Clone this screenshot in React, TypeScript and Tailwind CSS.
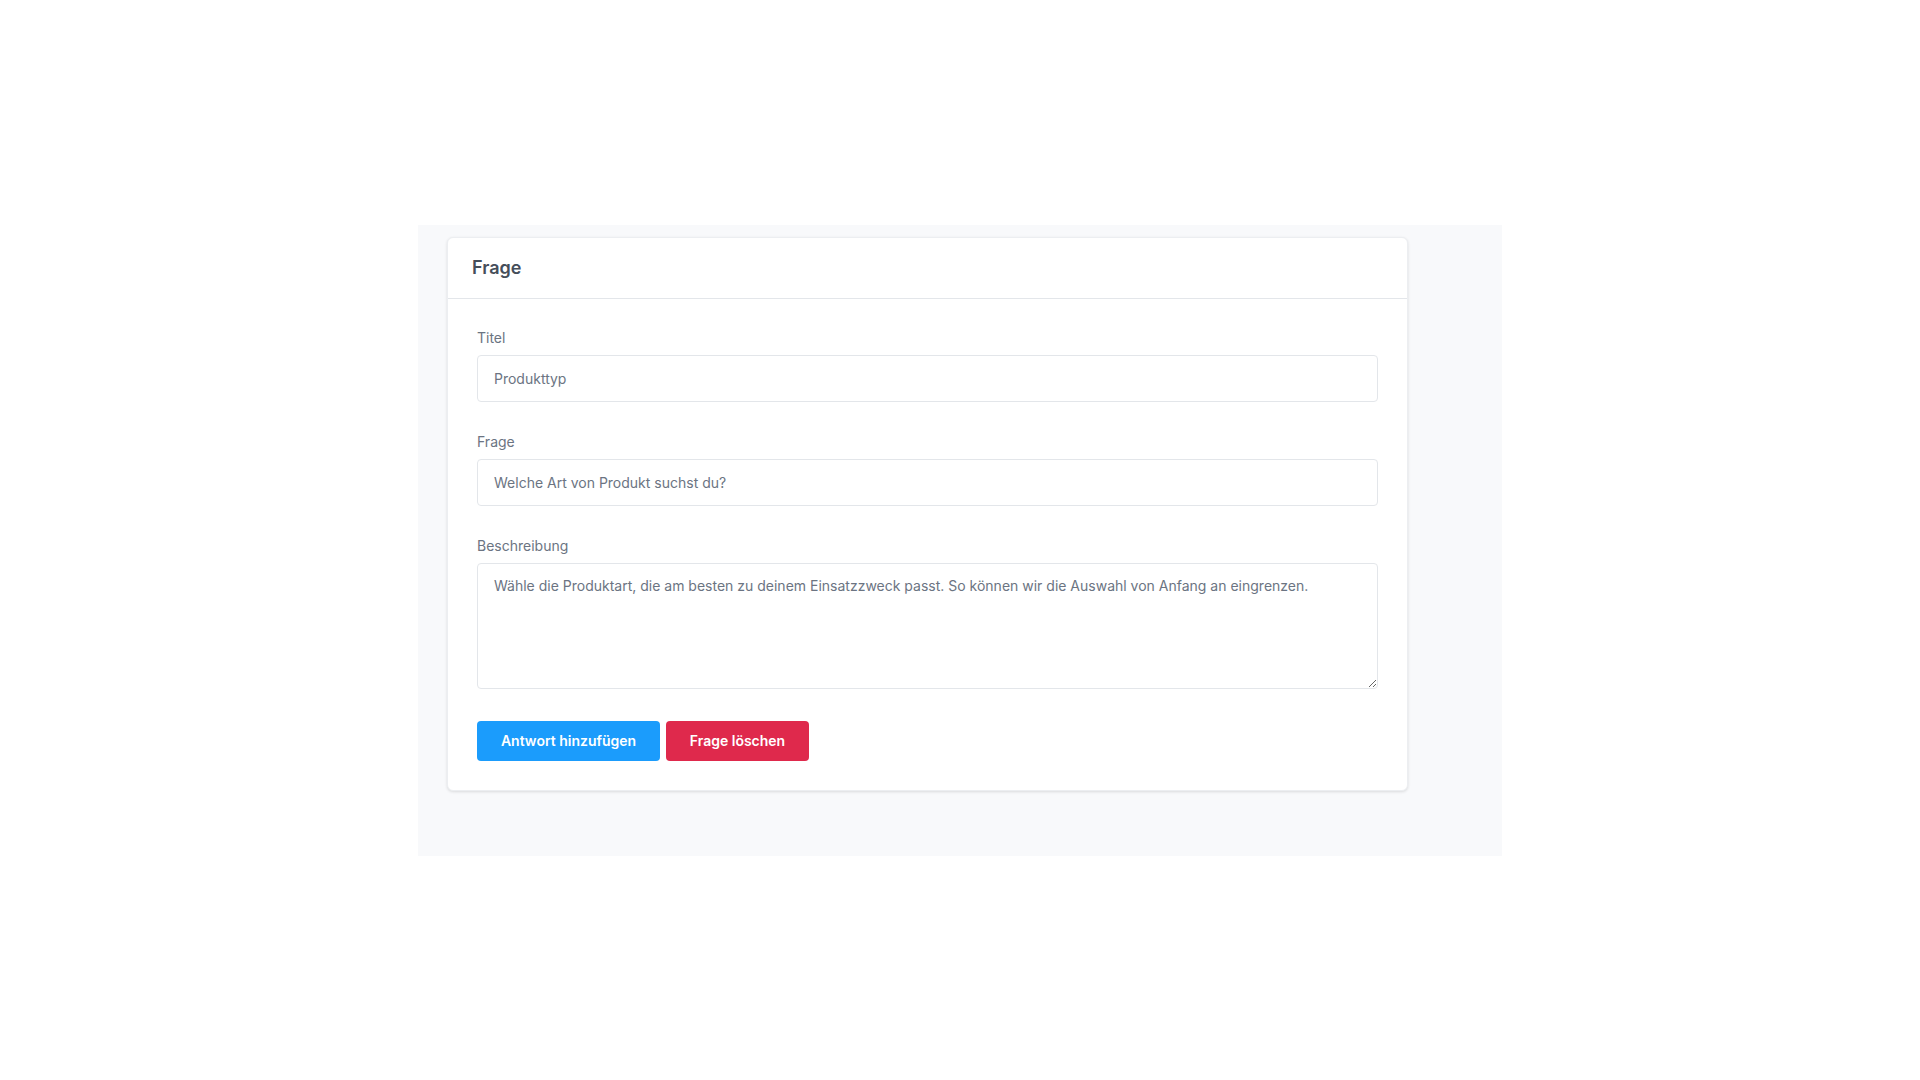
import React from "react";

const fields = [
  { label: "Titel", value: "Produkttyp" },
  { label: "Frage", value: "Welche Art von Produkt suchst du?" },
];

export default function App() {
  return (
    <div
      className="min-h-screen w-full bg-white flex items-center justify-center"
      style={{ fontFamily: "Inter, 'Noto Sans', sans-serif" }}
    >
      {/* outer panel */}
      <div className="w-[1084px] h-[631px] bg-[#f8f9fb] pt-3 pl-[29px]">
        <div className="w-[961px] bg-white rounded-md border border-[#eceef1] shadow-[0_1px_3px_rgba(0,0,0,0.12)]">
          {/* Header */}
          <div className="h-[61px] flex items-center px-6 border-b border-[#e3e6ea]">
            <h2 className="text-[18px] font-semibold text-[#454e5a]">Frage</h2>
          </div>

          {/* Body */}
          <div className="px-[29px] pt-[29px] pb-[29px]">
            {fields.map((f) => (
              <div key={f.label} className="mb-[30px]">
                <label className="block text-[14px] leading-5 text-[#6b7482] mb-[7px]">{f.label}</label>
                <input
                  type="text"
                  defaultValue={f.value}
                  className="w-full h-[47px] rounded border border-[#e3e6ea] bg-white px-4 text-[14px] text-[#6b7482] outline-none"
                />
              </div>
            ))}

            <div>
              <label className="block text-[14px] leading-5 text-[#6b7482] mb-[7px]">Beschreibung</label>
              <textarea
                defaultValue="Wähle die Produktart, die am besten zu deinem Einsatzzweck passt. So können wir die Auswahl von Anfang an eingrenzen."
                className="block w-full h-[126px] rounded border border-[#e3e6ea] bg-white px-4 pt-3 text-[14px] leading-5 text-[#6b7482] outline-none"
              />
            </div>

            <div className="flex items-center gap-[6px] mt-[32px]">
              <button className="h-10 w-[183px] rounded bg-[#1b9cfc] text-white text-[14px] font-semibold">
                Antwort hinzufügen
              </button>
              <button className="h-10 w-[143px] rounded bg-[#df294c] text-white text-[14px] font-semibold">
                Frage löschen
              </button>
            </div>
          </div>
        </div>
      </div>
    </div>
  );
}
